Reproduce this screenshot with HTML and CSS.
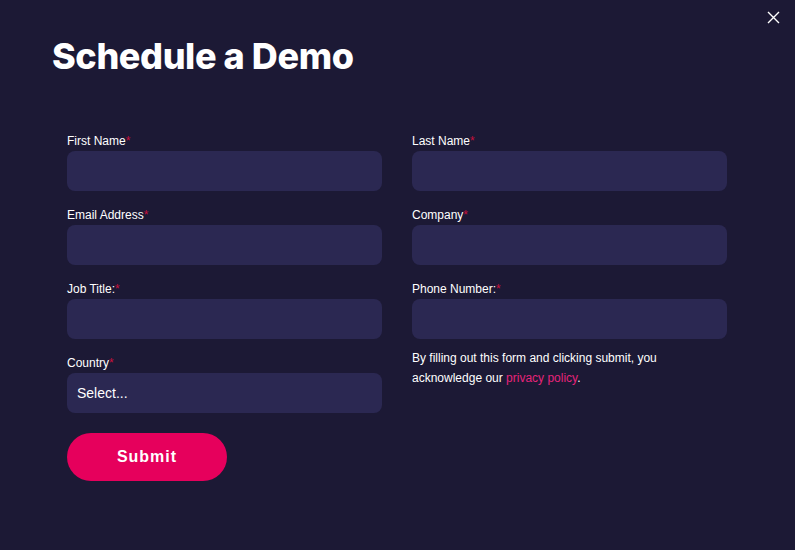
FILE: index.html
```html
<!DOCTYPE html>
<html lang="en">
<head>
  <meta charset="UTF-8" />
  <meta name="viewport" content="width=device-width, initial-scale=1.0"/>
  <title>Schedule a Demo</title>
  <link rel="stylesheet" href="styles.css">
</head>
<body>
  <div class="modal">
    <button class="close" aria-label="Close">
      <svg width="13" height="13" viewBox="0 0 13 13"><path d="M1 1L12 12M12 1L1 12" stroke="#fff" stroke-width="1.4" fill="none"/></svg>
    </button>
    <h1>Schedule a Demo</h1>

    <form class="demo-form">
      <div class="field">
        <label>First Name<span class="req">*</span></label>
        <input type="text" />
      </div>
      <div class="field">
        <label>Last Name<span class="req">*</span></label>
        <input type="text" />
      </div>
      <div class="field">
        <label>Email Address<span class="req">*</span></label>
        <input type="email" />
      </div>
      <div class="field">
        <label>Company<span class="req">*</span></label>
        <input type="text" />
      </div>
      <div class="field">
        <label>Job Title:<span class="req">*</span></label>
        <input type="text" />
      </div>
      <div class="field">
        <label>Phone Number:<span class="req">*</span></label>
        <input type="tel" />
      </div>
      <div class="field">
        <label>Country<span class="req">*</span></label>
        <div class="select">Select...</div>
      </div>
      <p class="consent">By filling out this form and clicking submit, you acknowledge our <a href="#">privacy policy</a>.</p>
      <div class="actions">
        <button type="submit" class="submit">Submit</button>
      </div>
    </form>
  </div>
</body>
</html>
```

FILE: styles.css
```css
body { margin: 0; background: #1c1935; font-family: "Liberation Sans", Arial, sans-serif; color: #fff; }
.modal { position: relative; height: 550px; padding: 36px 0 0 52px; box-sizing: border-box; }
.close { position: absolute; top: 11px; right: 15px; background: none; border: none; padding: 0; cursor: pointer; }
h1 { margin: 0; font-family: Inter, sans-serif; font-weight: 800; font-size: 36px; line-height: 40px; letter-spacing: -0.4px; }
.demo-form { display: grid; grid-template-columns: 315px 315px; column-gap: 30px; row-gap: 17px; margin: 58px 0 0 15px; }
.field label { display: block; font-size: 12px; line-height: 14px; margin-bottom: 3px; }
.req { color: #c8103c; }
.field input, .select { display: block; width: 100%; height: 40px; box-sizing: border-box; background: #2b2852; border: none; border-radius: 8px; padding: 0 10px; color: #fff; font-family: inherit; font-size: 14px; }
.select { line-height: 40px; }
.consent { margin: -8px 0 0; font-size: 12px; line-height: 20px; }
.consent a { color: #e6247a; text-decoration: none; }
.actions { grid-column: 1 / -1; padding-top: 3px; }
.submit { width: 160px; height: 48px; border: none; border-radius: 24px; background: #e6005c; color: #fff; font-family: "Liberation Sans", Arial, sans-serif; font-weight: bold; font-size: 16px; letter-spacing: 1px; cursor: pointer; }
```
